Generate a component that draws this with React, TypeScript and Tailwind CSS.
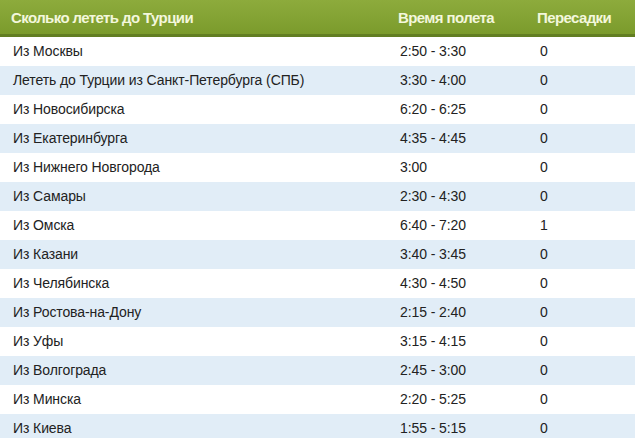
import React from "react";

const rows: [string, string, string][] = [
  ["Из Москвы", "2:50 - 3:30", "0"],
  ["Лететь до Турции из Санкт-Петербурга (СПБ)", "3:30 - 4:00", "0"],
  ["Из Новосибирска", "6:20 - 6:25", "0"],
  ["Из Екатеринбурга", "4:35 - 4:45", "0"],
  ["Из Нижнего Новгорода", "3:00", "0"],
  ["Из Самары", "2:30 - 4:30", "0"],
  ["Из Омска", "6:40 - 7:20", "1"],
  ["Из Казани", "3:40 - 3:45", "0"],
  ["Из Челябинска", "4:30 - 4:50", "0"],
  ["Из Ростова-на-Дону", "2:15 - 2:40", "0"],
  ["Из Уфы", "3:15 - 4:15", "0"],
  ["Из Волгограда", "2:45 - 3:00", "0"],
  ["Из Минска", "2:20 - 5:25", "0"],
  ["Из Киева", "1:55 - 5:15", "0"],
];

export default function App() {
  return (
    <div
      className="w-[635px] h-[438px] overflow-hidden bg-white"
      style={{ fontFamily: '"Liberation Sans", Arial, sans-serif' }}
    >
      <div className="flex h-[37px] items-center pt-[3px] bg-gradient-to-b from-[#8dab3c] to-[#7b9b2c] border-b-[3px] border-[#627e22] text-[15px] font-bold text-[#f3f7dc] tracking-[-0.6px]">
        <div className="w-[398px] pl-[11px]">Сколько лететь до Турции</div>
        <div className="w-[139px]">Время полета</div>
        <div className="flex-1">Пересадки</div>
      </div>
      {rows.map((r, i) => (
        <div
          key={i}
          className={
            "flex h-[29px] items-center text-[14px] text-[#222] tracking-[-0.1px] " +
            (i % 2 === 1 ? "bg-[#e1edf7]" : "bg-white")
          }
        >
          <div className="w-[400px] pl-[13px]">{r[0]}</div>
          <div className="w-[140px]">{r[1]}</div>
          <div className="flex-1">{r[2]}</div>
        </div>
      ))}
    </div>
  );
}
